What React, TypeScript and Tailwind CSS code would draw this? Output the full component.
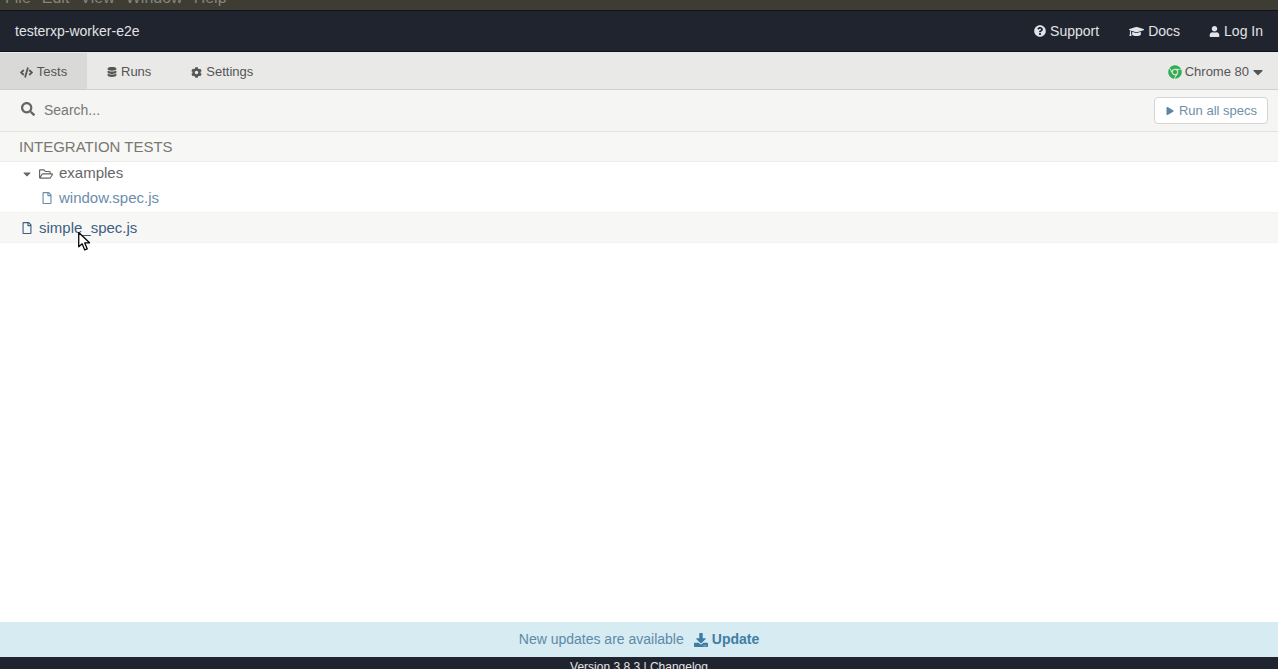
import { FaCaretDown, FaChrome, FaCode, FaCog, FaDatabase, FaDownload, FaGraduationCap, FaPlay, FaQuestionCircle, FaRegFile, FaRegFolderOpen, FaSearch, FaUser } from "react-icons/fa";

const menuItems = ["File", "Edit", "View", "Window", "Help"];

const Cursor = () => (
  <svg className="absolute left-[77px] top-[231px]" width="15" height="21" viewBox="0 0 14 20">
    <path d="M1.5 1.5 L1.5 15 L4.8 12.2 L7.2 18 L9.6 17 L7.2 11.4 L11.8 11.2 Z" fill="#fff" stroke="#000" strokeWidth="1.2" strokeLinejoin="round" />
  </svg>
);

const NavLink = ({ icon, label, className }: { icon: React.ReactNode; label: string; className: string }) => (
  <a className={`flex items-center gap-[4px] text-[14px] text-[#e1e3e6] ${className}`}>
    {icon}
    {label}
  </a>
);

const Tab = ({ icon, label, className }: { icon: React.ReactNode; label: string; className: string }) => (
  <div className={`flex h-full items-center gap-[4px] pt-[2px] text-[13px] text-[#555] ${className}`}>
    {icon}
    {label}
  </div>
);

const App = () => {
  return (
    <div className="relative flex h-screen flex-col overflow-hidden bg-white font-['Liberation_Sans',Arial,sans-serif]">
      <div className="flex h-[10px] shrink-0 items-start gap-[11px] bg-[#3e3d34] pl-[5px] text-[16px] leading-[16px] text-[#85847b]">
        {menuItems.map((item) => (
          <span key={item} className="-mt-[10px] shrink-0">
            {item}
          </span>
        ))}
      </div>

      <nav className="flex h-[42px] shrink-0 items-center border-y border-[#111318] bg-[#20242e] pl-[15px] pr-[15px]">
        <span className="text-[14px] text-[#e1e3e6]">testerxp-worker-e2e</span>
        <div className="ml-auto flex items-center">
          <NavLink icon={<FaQuestionCircle className="size-[12px]" />} label="Support" className="mr-[30px]" />
          <NavLink icon={<FaGraduationCap className="size-[15px]" />} label="Docs" className="mr-[29px]" />
          <NavLink icon={<FaUser className="size-[11px]" />} label="Log In" className="" />
        </div>
      </nav>

      <div className="flex h-[38px] shrink-0 items-center border-b border-[#cfcfcd] bg-[#e9e9e8] pt-[1px] pr-[15px]">
        <Tab icon={<FaCode className="size-[13px]" />} label="Tests" className="w-[87px] justify-center bg-[#d9d9d8]" />
        <Tab icon={<FaDatabase className="size-[10px]" />} label="Runs" className="ml-[20px]" />
        <Tab icon={<FaCog className="size-[11px]" />} label="Settings" className="ml-[40px]" />
        <div className="ml-auto flex items-center pt-[2px] text-[13px] text-[#555]">
          <FaChrome className="mr-[3px] size-[14px] text-[#2fae52]" />
          Chrome 80
          <FaCaretDown className="-mr-[3px] ml-[1px] size-[16px]" />
        </div>
      </div>

      <div className="flex h-[42px] shrink-0 items-center border-b border-[#e3e3e1] bg-[#f5f5f4] pl-[21px] pr-[10px]">
        <FaSearch className="mb-[3px] size-[14px] text-[#666]" />
        <span className="ml-[9px] text-[14px] text-[#777]">Search...</span>
        <button className="ml-auto flex h-[27px] items-center gap-[5px] rounded-[4px] border border-[#d5d5d5] bg-white pl-[11px] pr-[10px] text-[13px] text-[#6f8fa8]">
          <FaPlay className="size-[8px] text-[#5b86a8]" />
          Run all specs
        </button>
      </div>

      <div className="flex h-[30px] shrink-0 items-center border-b border-[#ececea] bg-[#f7f8f6] pl-[19px] pt-[1px] text-[15px] text-[#7a7670]">
        INTEGRATION TESTS
      </div>

      <div className="flex h-[23px] shrink-0 items-center pl-[22px] text-[15px] text-[#666]">
        <FaCaretDown className="-ml-[1px] size-[12px]" />
        <FaRegFolderOpen className="ml-[6px] size-[14px]" />
        <span className="ml-[6px]">examples</span>
      </div>
      <div className="flex h-[25px] shrink-0 items-center pl-[41px] pt-[1px] text-[15px] text-[#6b8dab]">
        <FaRegFile className="size-[12px]" />
        <span className="ml-[6px]">window.spec.js</span>
      </div>
      <div className="mt-[2px] flex h-[31px] shrink-0 items-center border-y border-[#f3f4f1] bg-[#f7f8f6] pl-[21px] pt-[1px] text-[15px] text-[#3f5f82]">
        <FaRegFile className="size-[12px]" />
        <span className="ml-[6px]">simple_spec.js</span>
      </div>

      <div className="flex-1" />

      <div className="flex h-[35px] shrink-0 items-center justify-center bg-[#d7ebf2] text-[14px] text-[#5c8aa8]">
        New updates are available
        <FaDownload className="ml-[10px] size-[14px] text-[#3f7ea3]" />
        <span className="ml-[4px] font-bold text-[#3f7ea3]">Update</span>
      </div>
      <div className="flex h-[12px] shrink-0 items-start justify-center overflow-hidden bg-[#20242e] pt-[3px] text-[12px] leading-[14px] text-[#e1e3e6]">
        Version 3.8.3 | Changelog
      </div>

      <Cursor />
    </div>
  );
};

export default App;
